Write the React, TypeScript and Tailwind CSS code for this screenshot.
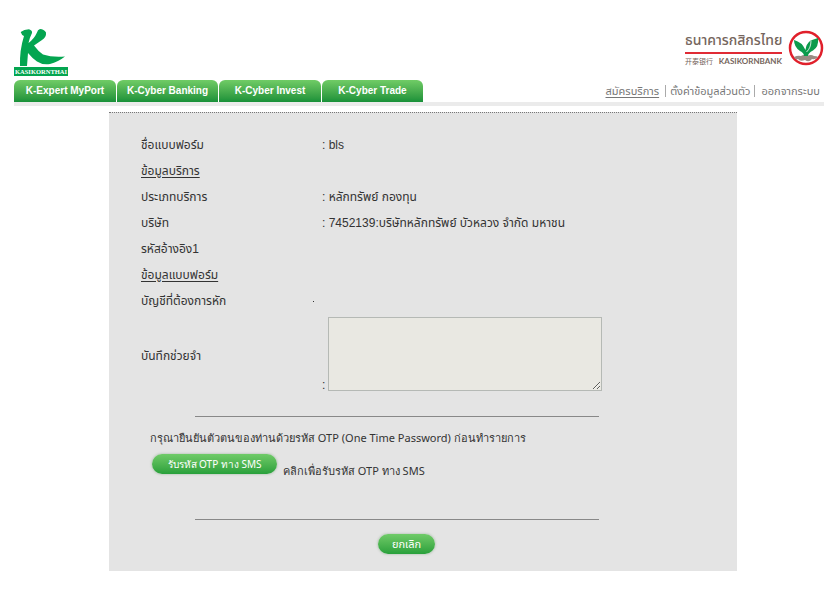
import React from "react";

const tabs = [
  { label: "K-Expert MyPort", width: "w-[102px]" },
  { label: "K-Cyber Banking", width: "w-[101px]" },
  { label: "K-Cyber Invest", width: "w-[102px]" },
  { label: "K-Cyber Trade", width: "w-[101px]" },
];

const pill =
  "rounded-full bg-linear-to-b from-[#6fcb68] to-[#27a03b] text-[11px] leading-4 text-white shadow-[0_0_2px_1px_#c4cfc4]";

function ThaiLogo() {
  return (
    <svg viewBox="0 0 54 48" className="h-12 w-[54px]" role="img" aria-label="KASIKORNTHAI">
      <path
        fill="#04a550"
        d="M6.700 4 Q10 1.500 15 1.300 Q18.500 2.500 18 5 Q15.500 10 14.500 15 Q20 11 23 4.500 Q23.500 1.500 26 1 Q30 1 32 4.500 Q32.500 9 28 12 L20 17.500 Q24 23 29 26.500 Q38 29.500 51 28.500 Q44 34 36 36 Q28 37 23 33.500 Q18 30 14 25 L13 38 H6 Q5.500 22 10 8 Q7.500 7 6.700 4Z"
      />
      <rect y="39" width="54" height="9" fill="#04a550" />
      <text x="27" y="46" textAnchor="middle" fill="#fff" fontFamily="Liberation Serif, serif" fontWeight="700" fontSize="6.500">
        KASIKORNTHAI
      </text>
    </svg>
  );
}

function BankEmblem() {
  return (
    <svg viewBox="0 0 36 36" className="size-9" aria-hidden="true">
      <circle cx="18" cy="18" r="16" fill="#fff" stroke="#e0202b" strokeWidth="2.500" />
      <path fill="#9a8c84" d="M6 27 Q10 25 13 26 Q16 24 19 26 Q23 24 26 26 Q29 26 30 27 Q27 30 24 29 Q21 33 17 30 Q12 32 10 29 Q7 30 6 27Z" />
      <path fill="#0c9b4c" d="M16 26 Q16 23 12 21 Q6 17 6 10 Q14 12 17.500 20 Q18 14 22.500 10.500 L30 8 Q31 17 25 20.500 Q20 23 20 26Z" />
      <path fill="none" stroke="#fff" strokeWidth=".8" d="M18.500 22 Q23 18 23 10.500" />
    </svg>
  );
}

function Row({ label, value, underline }: { label: string; value?: string; underline?: boolean }) {
  return (
    <div className="flex h-[26px] items-center">
      <dt className={underline ? "w-[181px] underline underline-offset-2" : "w-[181px]"}>{label}</dt>
      {value && <dd>{value}</dd>}
    </div>
  );
}

export default function App() {
  return (
    <div className="bg-white font-['Liberation_Sans','Noto_Sans_Thai',sans-serif] text-[12px] leading-4 text-[#333]">
      <header className="pr-4 pl-[14px]">
        <div className="flex h-20 items-end justify-between pb-1">
          <ThaiLogo />
          <div className="flex items-center gap-[6px] pb-2">
            <div className="w-[97px] text-[#75655c]">
              <div className="border-b-2 border-[#e02b35] text-[14px] leading-6 font-medium whitespace-nowrap">ธนาคารกสิกรไทย</div>
              <div className="flex items-center justify-between text-[7px] leading-[14px] whitespace-nowrap">
                <span className="font-['Noto_Sans_CJK_SC',sans-serif]">开泰银行</span>
                <span className="font-[Lato,sans-serif] text-[8px] font-bold">KASIKORNBANK</span>
              </div>
            </div>
            <BankEmblem />
          </div>
        </div>
        <div className="flex items-end justify-between">
          <nav className="flex gap-px">
            {tabs.map((t) => (
              <a
                key={t.label}
                href="#"
                className={`${t.width} h-[22px] rounded-t-md bg-linear-to-b from-[#70cc66] to-[#169139] text-center text-[10px] leading-[22px] font-bold text-white`}
              >
                {t.label}
              </a>
            ))}
          </nav>
          <nav className="flex h-[22px] items-center pr-1 text-[11px] text-[#777]">
            <a href="#" className="pr-[6px] underline underline-offset-2">สมัครบริการ</a>
            <a href="#" className="border-l border-[#aaa] px-1 leading-3">ตั้งค่าข้อมูลส่วนตัว</a>
            <a href="#" className="border-l border-[#aaa] pl-[6px] leading-3">ออกจากระบบ</a>
          </nav>
        </div>
        <div className="h-1 bg-[#ebebeb]" />
      </header>

      <main className="mt-[6px] mr-[103px] ml-[109px] border-t border-dotted border-[#777] bg-[#e4e4e4] pt-[19px] pb-[17px]">
        <dl className="pl-8">
          <Row label="ชื่อแบบฟอร์ม" value=": bls" />
          <Row label="ข้อมูลบริการ" underline />
          <Row label="ประเภทบริการ" value=": หลักทรัพย์ กองทุน" />
          <Row label="บริษัท" value=": 7452139:บริษัทหลักทรัพย์ บัวหลวง จำกัด มหาชน" />
          <Row label="รหัสอ้างอิง1" />
          <Row label="ข้อมูลแบบฟอร์ม" underline />
          <div className="flex h-[26px] items-center">
            <dt className="w-[172px]">บัญชีที่ต้องการหัก</dt>
            <dd className="size-px bg-[#333]" />
          </div>
        </dl>
        <div className="mt-[3px] flex items-center pl-8">
          <label htmlFor="memo" className="w-[181px] pt-1">บันทึกช่วยจำ</label>
          <div className="flex items-end gap-[3px]">
            <span className="leading-3">:</span>
            <textarea id="memo" className="block h-[74px] w-[274px] resize border border-[#b5b9b5] bg-[#e9e8e2]" />
          </div>
        </div>
        <hr className="mt-[25px] mr-[138px] ml-[86px] border-[#888]" />
        <div className="pl-[41px] font-['Noto_Sans',sans-serif] text-[11px]">
          <p className="mt-[13px]">กรุณายืนยันตัวตนของท่านด้วยรหัส OTP (One Time Password) ก่อนทำรายการ</p>
          <div className="mt-2 flex items-start gap-[6px] pl-[2px]">
            <button type="button" className={`${pill} h-5 w-[125px]`}>
              <span className="text-[10px]">รับรหัส OTP ทาง SMS</span>
            </button>
            <span className="mt-[9px]">คลิกเพื่อรับรหัส OTP ทาง SMS</span>
          </div>
        </div>
        <hr className="mt-10 mr-[138px] ml-[86px] border-[#888]" />
        <div className="mt-[14px] flex pl-[269px]">
          <button type="button" className={`${pill} h-5 w-[57px]`}>ยกเลิก</button>
        </div>
      </main>
    </div>
  );
}
